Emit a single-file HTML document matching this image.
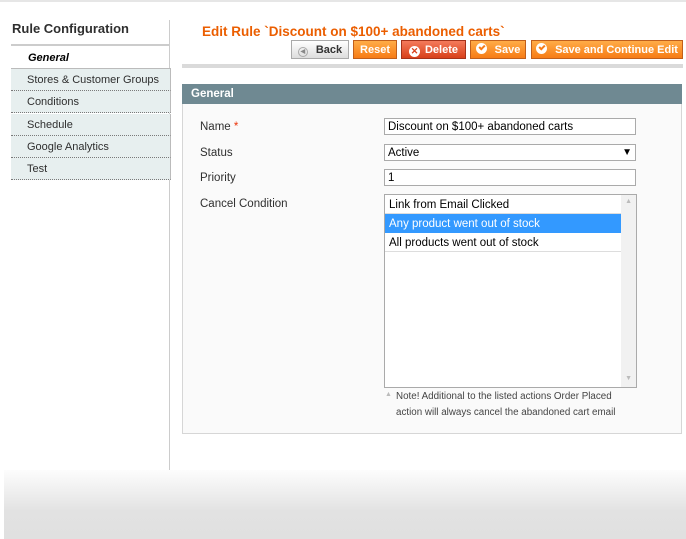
<!DOCTYPE html>
<html><head><style>
*{margin:0;padding:0;box-sizing:border-box}
body{width:686px;height:539px;position:relative;background:#fff;font-family:"Liberation Sans",Arial,sans-serif;font-size:12px;color:#2f2f2f;overflow:hidden}
.abs{position:absolute;white-space:nowrap}
.tab{position:absolute;left:11px;width:160px;height:22px;background:#e7efef;border-bottom:1px dotted #7a7a7a;border-right:1px solid #bbb;padding-left:16px;line-height:23px;font-size:11px;color:#2f2f2f;white-space:nowrap}
.btn{position:absolute;top:40px;height:19px;border:1px solid #c15f1b;background:linear-gradient(#ffac47,#f77c16);color:#fff;font-weight:bold;font-size:11px;line-height:18px;text-align:center;white-space:nowrap}
.chk{display:inline-block;width:11px;height:11px;border-radius:50%;background:#fff;vertical-align:-1px;margin-right:8px;position:relative}
.chk:after{content:"";position:absolute;left:3px;top:2px;width:4px;height:2px;border-left:2px solid #f77c16;border-bottom:2px solid #f77c16;transform:rotate(-45deg)}
.lbl{position:absolute;left:200px;font-size:11.5px}
.inp{position:absolute;left:384px;width:252px;height:17px;border:1px solid #aaa;background:#fff;padding-left:3px;line-height:16px;font-size:11.5px;color:#000;white-space:nowrap}
</style></head><body>
<div class="abs" style="left:0;top:0;width:686px;height:2px;background:#e6e6e6"></div>
<div class="abs" style="left:12px;top:21px;font-size:13px;font-weight:bold;color:#2f2f2f">Rule Configuration</div>
<div class="abs" style="left:11px;top:44px;width:159px;height:2px;background:#ccc"></div>
<div class="abs" style="left:169px;top:20px;width:1px;height:450px;background:#ccc"></div>
<div class="abs" style="left:28px;top:52px;font-weight:bold;font-style:italic;font-size:11px;color:#000">General</div>
<div class="abs" style="left:11px;top:68px;width:160px;height:1px;background:#bbb"></div>
<div class="tab" style="top:69px;line-height:22px">Stores &amp; Customer Groups</div>
<div class="tab" style="top:91px">Conditions</div>
<div class="tab" style="top:114px">Schedule</div>
<div class="tab" style="top:136px">Google Analytics</div>
<div class="tab" style="top:158px">Test</div>

<div class="abs" style="left:202px;top:24px;font-size:13.5px;font-weight:bold;color:#eb5e00">Edit Rule `Discount on $100+ abandoned carts`</div>
<div class="btn" style="left:291px;width:58px;border-color:#aaa;background:linear-gradient(#fff,#ddd);color:#333"><span style="display:inline-block;width:10px;height:10px;border-radius:50%;border:1px solid #aaa;font-size:6px;line-height:8px;color:#888;vertical-align:0;margin-right:8px">◀</span>Back</div>
<div class="btn" style="left:353px;width:44px">Reset</div>
<div class="btn" style="left:401px;width:65px;border-color:#a4321a;background:linear-gradient(#f47a5b,#d8401a)"><span style="display:inline-block;width:11px;height:11px;border-radius:50%;background:#fff;color:#d8401a;font-size:9px;line-height:11px;vertical-align:-1px;margin-right:5px">✕</span>Delete</div>
<div class="btn" style="left:470px;width:56px"><span class="chk"></span>Save</div>
<div class="btn" style="left:531px;width:152px"><span class="chk"></span>Save and Continue Edit</div>
<div class="abs" style="left:182px;top:64px;width:501px;height:4px;background:#dadada"></div>

<div class="abs" style="left:182px;top:84px;width:500px;height:20px;background:#6f8992;color:#fff;font-weight:bold;font-size:11.5px;padding-left:9px;line-height:21px">General</div>
<div class="abs" style="left:182px;top:104px;width:500px;height:330px;background:#fafafa;border:1px solid #d6d6d6;border-top:none"></div>
<div class="lbl" style="top:121px">Name <span style="color:#eb340a">*</span></div>
<div class="lbl" style="top:147px">Status</div>
<div class="lbl" style="top:172px">Priority</div>
<div class="lbl" style="top:198px">Cancel Condition</div>
<div class="inp" style="top:118px">Discount on $100+ abandoned carts</div>
<div class="inp" style="top:144px">Active<span style="position:absolute;right:3px;top:0;font-size:10px">▼</span></div>
<div class="inp" style="top:169px">1</div>
<div class="abs" style="left:384px;top:194px;width:253px;height:194px;border:1px solid #aaa;background:#fff;font-size:11.5px">
 <div style="height:19px;line-height:20px;padding-left:4px;color:#000;border-bottom:1px solid #ddd;width:236px">Link from Email Clicked</div>
 <div style="height:19px;line-height:20px;padding-left:4px;color:#fff;background:#3399ff;width:236px">Any product went out of stock</div>
 <div style="height:19px;line-height:20px;padding-left:4px;color:#000;border-bottom:1px solid #ddd;width:236px">All products went out of stock</div>
 <div style="position:absolute;right:0;top:0;width:15px;height:192px;background:#f1f1f1"></div>
 <div style="position:absolute;right:4px;top:3px;font-size:7px;color:#bbb">▲</div>
 <div style="position:absolute;right:4px;bottom:5px;font-size:7px;color:#bbb">▼</div>
</div>
<div class="abs" style="left:385px;top:391px;font-size:7px;color:#bbb">▲</div>
<div class="abs" style="left:396px;top:389px;font-size:9.8px;line-height:16px;color:#444">Note! Additional to the listed actions Order Placed<br>action will always cancel the abandoned cart email</div>

<div class="abs" style="left:4px;top:470px;width:682px;height:69px;background:linear-gradient(#fdfdfd,#e2e2e2 60%,#e0e0e0)"></div>
</body></html>
